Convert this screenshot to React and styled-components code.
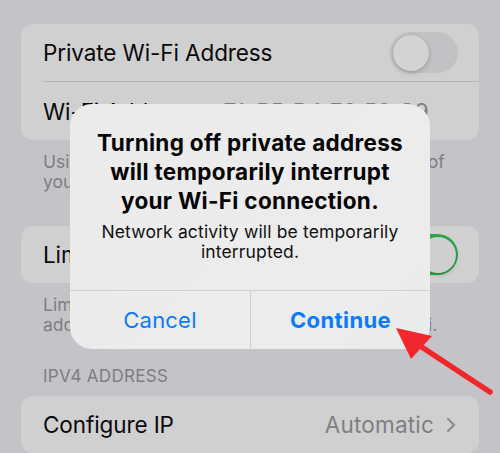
import React from "react";
import styled, { createGlobalStyle } from "styled-components";

const GlobalStyle = createGlobalStyle`
  html, body {
    margin: 0;
    padding: 0;
    background: #c4c3c8;
  }
  body {
    font-family: Inter, "Noto Sans", "Liberation Sans", sans-serif;
    -webkit-font-smoothing: antialiased;
  }
`;

function App() {
  return (
    <>
      <GlobalStyle />
      <Screen>
        <Card>
          <Row>
            <Label>Private Wi-Fi Address</Label>
            <Toggle />
          </Row>
          <Row>
            <Label>Wi-Fi Address</Label>
            <Value $inset={29}>7A:BB:B4:E2:59:C9</Value>
          </Row>
        </Card>
        <Footer>
          Using a private address helps reduce tracking of
          <br />
          your iPhone across different Wi-Fi networks.
        </Footer>

        <Card $top={34}>
          <Row>
            <Label>Limit IP Address Tracking</Label>
            <Toggle $on />
          </Row>
        </Card>
        <Footer>
          Limit IP address tracking by hiding your IP
          <br />
          address from known trackers in Mail and Safari.
        </Footer>

        <SectionHeader>IPV4 ADDRESS</SectionHeader>
        <Card>
          <Row>
            <Label>Configure IP</Label>
            <Value $inset={2}>
              Automatic
              <svg width="10" height="16" viewBox="0 0 10 16">
                <path
                  d="M2 2 L8 8 L2 14"
                  fill="none"
                  stroke="#8e8e91"
                  strokeWidth="2.4"
                  strokeLinecap="round"
                  strokeLinejoin="round"
                />
              </svg>
            </Value>
          </Row>
        </Card>

        <Alert>
          <AlertBody>
            <AlertTitle>
              Turning off private address
              <br />
              will temporarily interrupt
              <br />
              your Wi-Fi connection.
            </AlertTitle>
            <AlertMessage>
              Network activity will be temporarily
              <br />
              interrupted.
            </AlertMessage>
          </AlertBody>
          <Actions>
            <ActionButton>Cancel</ActionButton>
            <ActionButton $bold>Continue</ActionButton>
          </Actions>
        </Alert>

        <Arrow viewBox="0 0 500 453" width="500" height="453">
          <line
            x1="490"
            y1="392"
            x2="414"
            y2="342"
            stroke="#f2262b"
            strokeWidth="5.5"
            strokeLinecap="round"
          />
          <polygon points="396,328 432,336 411,359" fill="#f2262b" />
        </Arrow>
      </Screen>
    </>
  );
}

const Screen = styled.div`
  position: relative;
  width: 500px;
  height: 453px;
  overflow: hidden;
  padding: 24px 21px 0 21px;
  box-sizing: border-box;
  background: #c4c3c8;
`;

const Card = styled.div`
  margin-top: ${(p) => p.$top || 0}px;
  background: #d0d0d0;
  border-radius: 12px;
  padding-left: 22px;
  overflow: hidden;
`;

const Row = styled.div`
  display: flex;
  align-items: center;
  justify-content: space-between;
  height: 57px;
  padding-right: 21px;
  & + & {
    border-top: 1px solid #b6b6b8;
    height: 58px;
  }
`;

const Label = styled.div`
  font-size: 22.5px;
  color: #0a0a0a;
  letter-spacing: -0.1px;
`;

const Value = styled.div`
  display: flex;
  align-items: center;
  gap: 12px;
  font-size: 22.5px;
  color: #7f7f83;
  letter-spacing: 0.2px;
  margin-right: ${(p) => p.$inset || 0}px;
`;

const Toggle = styled.div`
  position: relative;
  width: 68px;
  height: 41px;
  border-radius: 21px;
  background: ${(p) => (p.$on ? "#2aa84a" : "#c2c2c4")};
  &::after {
    content: "";
    position: absolute;
    top: 2.5px;
    left: ${(p) => (p.$on ? "29.5px" : "2.5px")};
    width: 36px;
    height: 36px;
    border-radius: 50%;
    background: ${(p) => (p.$on ? "#cfcfcf" : "#d3d3d3")};
    box-shadow: 0 2px 5px rgba(0, 0, 0, 0.18), 0 0 0 0.5px rgba(0, 0, 0, 0.08);
  }
`;

const Footer = styled.div`
  padding: 12px 22px 0 22px;
  font-size: 17.5px;
  line-height: 20px;
  color: #7e7e83;
`;

const SectionHeader = styled.div`
  margin-top: 31px;
  padding: 0 22px 10px 22px;
  font-size: 17px;
  line-height: 20px;
  letter-spacing: 0.3px;
  color: #7e7e83;
`;

const Alert = styled.div`
  position: absolute;
  left: 70px;
  top: 104px;
  width: 360px;
  height: 245px;
  border-radius: 22px;
  background: linear-gradient(135deg, #ebebeb 0%, #ececec 60%, #eaeceb 100%);
  display: flex;
  flex-direction: column;
  overflow: hidden;
`;

const AlertBody = styled.div`
  flex: 1;
  display: flex;
  flex-direction: column;
  align-items: center;
  padding-top: 24px;
  text-align: center;
`;

const AlertTitle = styled.div`
  font-size: 22.5px;
  font-weight: 700;
  line-height: 29px;
  color: #050505;
  letter-spacing: 0.3px;
`;

const AlertMessage = styled.div`
  margin-top: 7px;
  font-size: 17.5px;
  line-height: 20px;
  letter-spacing: 0.15px;
  color: #111;
`;

const Actions = styled.div`
  display: grid;
  grid-template-columns: 1fr 1fr;
  height: 58px;
  border-top: 1px solid #cfcfd1;
`;

const ActionButton = styled.div`
  display: flex;
  align-items: center;
  justify-content: center;
  font-size: 22px;
  font-weight: ${(p) => (p.$bold ? 700 : 400)};
  letter-spacing: ${(p) => (p.$bold ? "0.4px" : "0.2px")};
  color: #0a7bff;
  padding-bottom: 1px;
  & + & {
    border-left: 1px solid #cfcfd1;
  }
`;

const Arrow = styled.svg`
  position: absolute;
  left: 0;
  top: 0;
  pointer-events: none;
`;

export default App;
